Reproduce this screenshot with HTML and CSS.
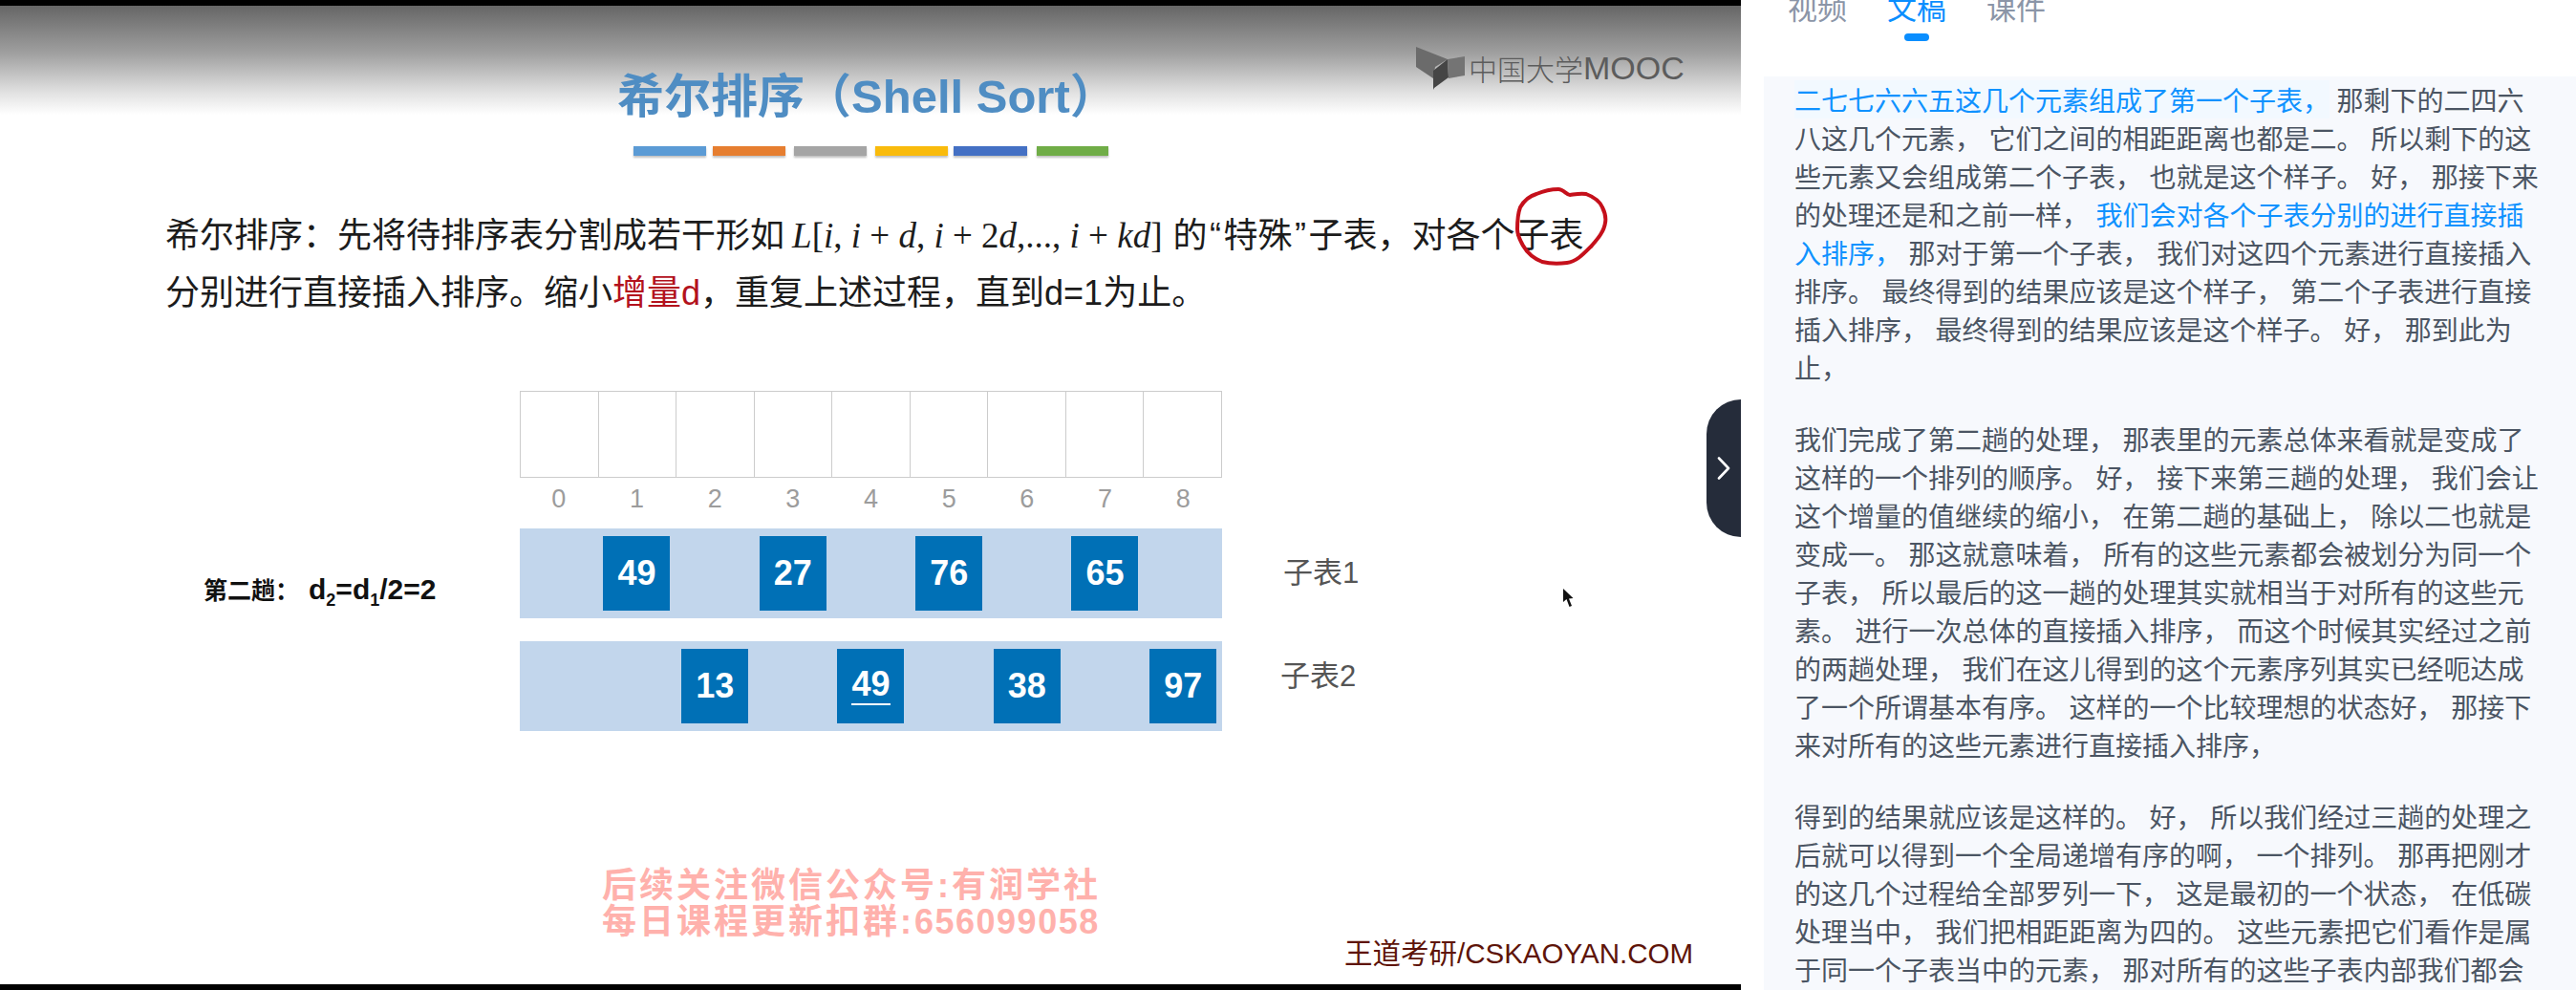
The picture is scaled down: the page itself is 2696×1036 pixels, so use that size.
FILE: index.html
```html
<!DOCTYPE html>
<html lang="zh-CN">

<head>
    <meta charset="UTF-8">
    <title>希尔排序</title>
    <link rel="stylesheet" href="styles.css">
</head>

<body>
    <div class="video">
        <div class="black-bar"></div>
        <div class="slide">
            <div class="logo">
                <svg class="logo-icon" viewBox="0 0 52 46" width="52" height="46">
                    <polygon points="0,1 33,14 20,22 18,34 0,22" fill="#6b6b6b" />
                    <polygon points="18,26 33,14 34,33 19,44 18,46" fill="#454545" />
                    <polygon points="33,14 51,11 51,31 34,34" fill="#747474" />
                </svg>
                <span class="logo-cn">中国大学</span><span class="logo-en">MOOC</span>
            </div>

            <h1 class="title">希尔排序（<span class="latin">Shell Sort</span>）</h1>
            <div class="stripes">
                <span class="stripe blue"></span>
                <span class="stripe orange"></span>
                <span class="stripe gray"></span>
                <span class="stripe yellow"></span>
                <span class="stripe navy"></span>
                <span class="stripe green"></span>
            </div>

            <p class="intro">
                希尔排序：先将待排序表分割成若干形如 <span class="math"><i>L</i>[<i>i</i>, <i>i</i> + <i>d</i>, <i>i</i> + 2<i>d</i>,..., <i>i</i> + <i>kd</i>]</span> 的<span class="latin quote">“</span>特殊<span class="latin quote">”</span>子表，对各个子表<br>
                分别进行直接插入排序。缩小<span class="red">增量<span class="latin">d</span></span>，重复上述过程，直到<span class="latin">d=1</span>为止。
            </p>

            <svg class="circle" viewBox="0 0 110 100" width="110" height="100">
                <path d="M51 8 C56 8 60 14 63 14 C70 13 74 12 80 13 C88 16 94 20 97 27 C100 33 101 38 100 43 C99 52 92 60 86 67 C78 75 70 84 60 85 C52 86 42 86 34 84 C24 80 18 74 14 67 C10 60 8 55 8 50 C8 42 8 35 11 27 C15 20 21 15 28 13 C35 10 43 8 51 8 Z" fill="none" stroke="#c5101b" stroke-width="4" />
            </svg>

            <div class="board">
                <div class="cells">
                    <span></span><span></span><span></span><span></span><span></span><span></span><span></span><span></span><span></span>
                </div>
                <div class="indexes">
                    <span>0</span><span>1</span><span>2</span><span>3</span><span>4</span><span>5</span><span>6</span><span>7</span><span>8</span>
                </div>

                <div class="pass-label">第二趟：<span class="formula">d<sub>2</sub>=d<sub>1</sub>/2=2</span></div>
                <div class="row first">
                    <span class="num c1">49</span>
                    <span class="num c3">27</span>
                    <span class="num c5">76</span>
                    <span class="num c7">65</span>
                </div>
                <div class="sub-label first">子表1</div>

                <div class="row second">
                    <span class="num c2">13</span>
                    <span class="num c4"><u>49</u></span>
                    <span class="num c6">38</span>
                    <span class="num c8">97</span>
                </div>
                <div class="sub-label second">子表2</div>
            </div>

            <div class="watermark">
                <div>后续关注微信公众号:有润学社</div>
                <div>每日课程更新扣群:<span class="digits">656099058</span></div>
            </div>
            <div class="credit">王道考研<span class="latin">/CSKAOYAN.COM</span></div>

            <svg class="cursor" viewBox="0 0 12 20" width="12" height="20">
                <path d="M1 0 L1 14 L4.5 11 L7.5 19 L10 18 L7 10.5 L11.5 10 Z" fill="#111" />
            </svg>

            <div class="collapse">
                <svg viewBox="0 0 14 24" width="14" height="24">
                    <path d="M2 1.5 L12 12 L2 22.5" fill="none" stroke="#fff" stroke-width="2.6" stroke-linecap="round" stroke-linejoin="round" />
                </svg>
            </div>
        </div>
        <div class="black-bar"></div>
    </div>

    <div class="side">
        <div class="tabs">
            <div class="tab">视频</div>
            <div class="tab active">文稿<span class="pill"></span></div>
            <div class="tab">课件</div>
        </div>
        <div class="transcript">
            <p><span class="playing">二七七六六五这几个元素组成了第一个子表，</span> 那剩下的二四六<br>
                八这几个元素， 它们之间的相距距离也都是二。 所以剩下的这<br>
                些元素又会组成第二个子表， 也就是这个样子。 好， 那接下来<br>
                的处理还是和之前一样， <span class="keyword">我们会对各个子表分别的进行直接插<br>
                入排序，</span> 那对于第一个子表， 我们对这四个元素进行直接插入<br>
                排序。 最终得到的结果应该是这个样子， 第二个子表进行直接<br>
                插入排序， 最终得到的结果应该是这个样子。 好， 那到此为<br>
                止，</p>
            <p>我们完成了第二趟的处理， 那表里的元素总体来看就是变成了<br>
                这样的一个排列的顺序。 好， 接下来第三趟的处理， 我们会让<br>
                这个增量的值继续的缩小， 在第二趟的基础上， 除以二也就是<br>
                变成一。 那这就意味着， 所有的这些元素都会被划分为同一个<br>
                子表， 所以最后的这一趟的处理其实就相当于对所有的这些元<br>
                素。 进行一次总体的直接插入排序， 而这个时候其实经过之前<br>
                的两趟处理， 我们在这儿得到的这个元素序列其实已经呃达成<br>
                了一个所谓基本有序。 这样的一个比较理想的状态好， 那接下<br>
                来对所有的这些元素进行直接插入排序，</p>
            <p>得到的结果就应该是这样的。 好， 所以我们经过三趟的处理之<br>
                后就可以得到一个全局递增有序的啊， 一个排列。 那再把刚才<br>
                的这几个过程给全部罗列一下， 这是最初的一个状态， 在低碳<br>
                处理当中， 我们把相距距离为四的。 这些元素把它们看作是属<br>
                于同一个子表当中的元素， 那对所有的这些子表内部我们都会</p>
        </div>
    </div>
</body>

</html>
```

FILE: styles.css
```css
html,
body {
    margin: 0;
    height: 1036px;
    overflow: hidden;
}

body {
    display: flex;
    background: #fff;
    font-family: "Noto Sans CJK SC", sans-serif;
}

.latin {
    font-family: "Liberation Sans", sans-serif;
    line-height: 0;
}

/* video */
.video {
    width: 1822px;
    height: 1036px;
    flex: none;
    display: flex;
    flex-direction: column;
}

.black-bar {
    height: 6px;
    background: #000;
}

.slide {
    flex: 1;
    position: relative;
    background: linear-gradient(to bottom, #666 0, #a0a0a0 50px, #e0e0e0 90px, #fff 114px);
}

.logo {
    position: absolute;
    left: 1482px;
    top: 42px;
    display: flex;
    align-items: center;
    height: 46px;
    color: #5c5c5c;
}

.logo-icon {
    margin-right: 3px;
}

.logo-cn {
    font-size: 30px;
    font-weight: 300;
}

.logo-en {
    font-family: "Liberation Sans", sans-serif;
    font-size: 34px;
}

.title {
    margin: 61px 0 0 646px;
    font-size: 49px;
    line-height: 60px;
    font-weight: 700;
    color: #4f8dc3;
    white-space: nowrap;
}

.stripes {
    display: flex;
    margin: 26px 0 0 663px;
}

.stripe {
    height: 10px;
    width: 76px;
    margin-right: 7px;
    box-shadow: 0 2px 2px rgba(0, 0, 0, 0.25);
}

.stripe.blue { background: #5b9bd5; }
.stripe.orange { background: #e67e30; width: 76px; margin-right: 9px; }
.stripe.gray { background: #a5a5a5; margin-right: 9px; }
.stripe.yellow { background: #f9bb0c; margin-right: 6px; }
.stripe.navy { background: #4470c4; width: 77px; margin-right: 10px; }
.stripe.green { background: #70ad47; width: 75px; }

.intro {
    margin: 50px 0 0 173px;
    font-size: 36px;
    line-height: 60px;
    color: #1c1c1c;
    white-space: nowrap;
}

.math {
    font-family: "Liberation Serif", serif;
    font-size: 37px;
    line-height: 0;
    margin-right: 3px;
}

.quote {
    padding: 0 2.5px;
}

.red {
    color: #b3121d;
}

.circle {
    position: absolute;
    left: 1580px;
    top: 184px;
}

/* array figure */
.board {
    display: grid;
    grid-template-columns: 331px 735px 1fr;
    margin: 76px 0 0 213px;
}

.cells,
.indexes,
.row {
    grid-column: 2;
    display: grid;
    grid-template-columns: repeat(9, 1fr);
}

.cells {
    height: 91px;
    border: solid #ccc;
    border-width: 1.5px 0 1.5px 1.5px;
    box-sizing: border-box;
}

.cells span {
    border-right: 1.5px solid #ccc;
}

.indexes {
    margin-top: 7px;
    height: 30px;
    font-family: "Liberation Sans", sans-serif;
    font-size: 27px;
    line-height: 30px;
    text-align: center;
    color: #9c9c9c;
}

.row {
    height: 94px;
    padding: 8px 0;
    box-sizing: border-box;
    background: #c2d6ec;
}

.row.first {
    grid-row: 3;
    margin-top: 16px;
}

.row.second {
    grid-row: 4;
    margin-top: 24px;
}

.num {
    width: 70px;
    height: 78px;
    justify-self: center;
    display: flex;
    align-items: center;
    justify-content: center;
    background: #0070b6;
    color: #fff;
    font-family: "Liberation Sans", sans-serif;
    font-size: 36px;
    font-weight: 700;
}

.num u {
    text-decoration: none;
    border-bottom: 2px solid #fff;
    line-height: 36px;
    padding-bottom: 2px;
}

.c1 { grid-column: 2; }
.c2 { grid-column: 3; }
.c3 { grid-column: 4; }
.c4 { grid-column: 5; }
.c5 { grid-column: 6; }
.c6 { grid-column: 7; }
.c7 { grid-column: 8; }
.c8 { grid-column: 9; }

.pass-label {
    grid-column: 1;
    grid-row: 3;
    align-self: end;
    margin-bottom: 16px;
    font-size: 25px;
    font-weight: 700;
    line-height: 30px;
    color: #111;
    white-space: nowrap;
}

.formula {
    margin-left: 10px;
    font-family: "Liberation Sans", sans-serif;
    font-size: 30px;
    line-height: 0;
}

.formula sub {
    font-size: 18px;
    line-height: 0;
}

.sub-label {
    grid-column: 3;
    font-family: "Liberation Sans", "Noto Sans CJK SC", sans-serif;
    font-size: 31px;
    line-height: 40px;
    color: #555;
}

.sub-label.first {
    grid-row: 3;
    margin: 43px 0 0 64px;
}

.sub-label.second {
    grid-row: 4;
    margin: 41px 0 0 61px;
}

.watermark {
    position: absolute;
    left: 630px;
    top: 902px;
    font-family: "Liberation Sans", "Noto Sans CJK SC", sans-serif;
    font-size: 36px;
    font-weight: 700;
    line-height: 38px;
    letter-spacing: 3px;
    color: #ffb1ac;
    white-space: nowrap;
}

.watermark .digits {
    letter-spacing: 1.5px;
}

.credit {
    position: absolute;
    left: 1407px;
    top: 970px;
    font-size: 29.5px;
    line-height: 38px;
    color: #5e1409;
    white-space: nowrap;
}

.cursor {
    position: absolute;
    left: 1635px;
    top: 610px;
}

.collapse {
    position: absolute;
    right: 0;
    top: 412px;
    width: 36px;
    height: 144px;
    display: flex;
    align-items: center;
    justify-content: center;
    border-radius: 36px 0 0 36px;
    background: #252c3a;
}

/* transcript column */
.side {
    flex: 1;
    display: flex;
    flex-direction: column;
    min-width: 0;
}

.tabs {
    display: flex;
    height: 80px;
    padding-left: 49px;
    overflow: hidden;
    flex: none;
}

.tab {
    margin: -9px 42px 0 0;
    height: 89px;
    font-size: 31px;
    line-height: 31px;
    color: #8b95a7;
    display: flex;
    flex-direction: column;
    align-items: center;
}

.tab.active {
    color: #0a8eff;
}

.pill {
    width: 26px;
    height: 8px;
    margin-top: 13px;
    border-radius: 4px;
    background: #0a8eff;
}

.transcript {
    flex: 1;
    margin-left: 24px;
    padding: 4px 0 0 32px;
    background: #f7f9fd;
    font-size: 28px;
    line-height: 40px;
    word-spacing: 1.3px;
    color: #4b5563;
    white-space: nowrap;
    overflow: hidden;
}

.transcript p {
    margin: 0 0 35px;
}

.playing {
    color: #0f92ff;
    background: #f2f9ff;
}

.keyword {
    color: #0f92ff;
}
```
